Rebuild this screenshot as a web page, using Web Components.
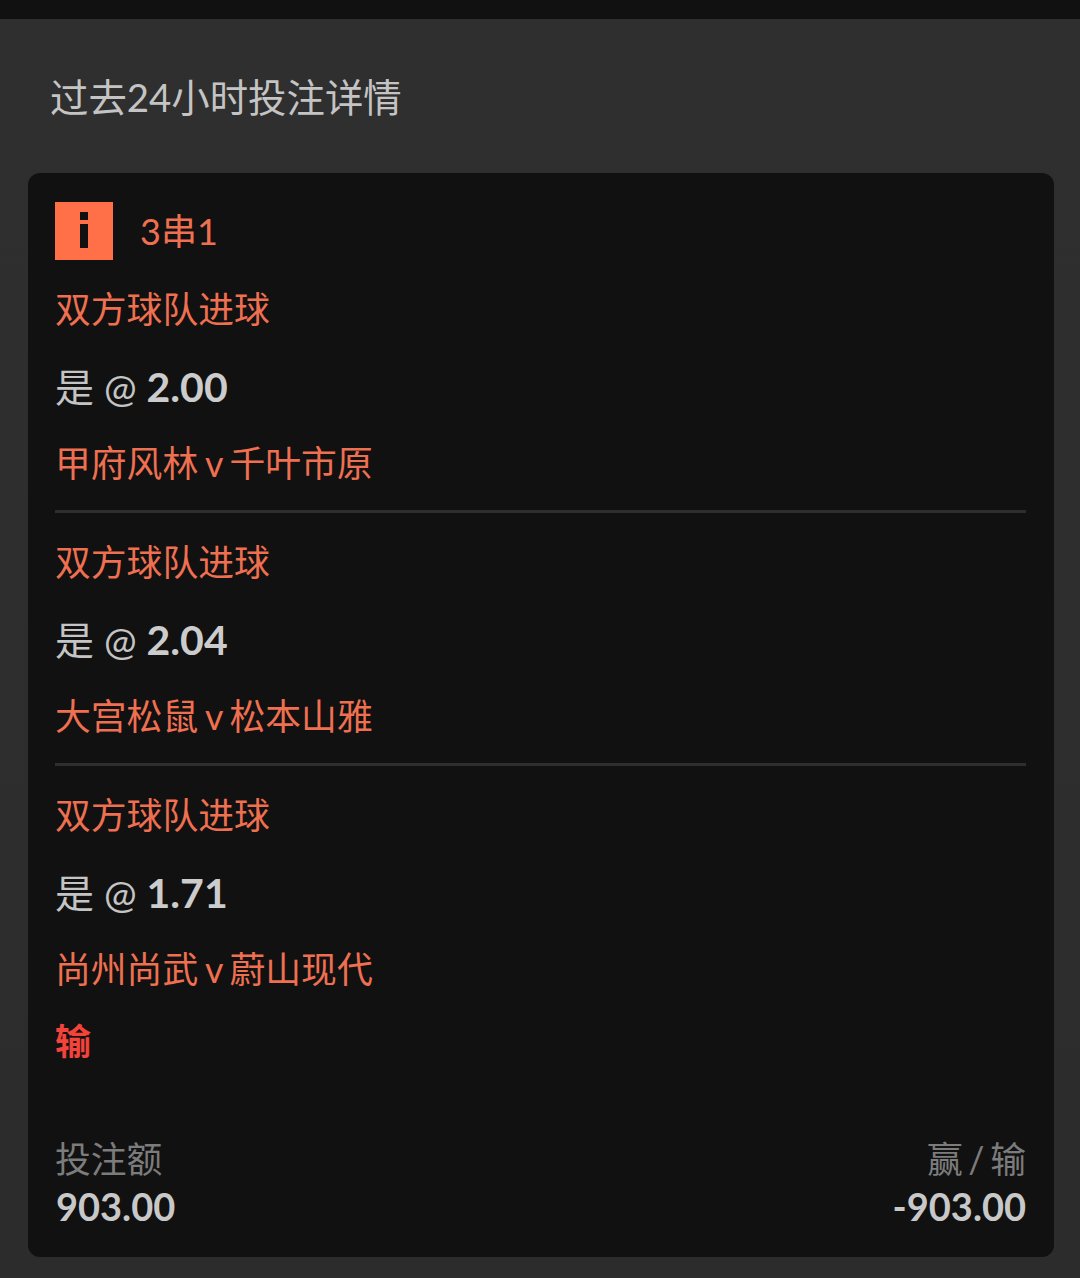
<!DOCTYPE html>
<html lang="zh">
<head>
<meta charset="utf-8">
<title>投注详情</title>
<style>
  html, body { margin: 0; background: #2e2e2e; }
  body { font-family: Lato, "Noto Sans CJK SC", sans-serif; }
</style>
</head>
<body>
<bet-history heading="过去24小时投注详情">
  <bet-card type="3串1" result="输" stake="903.00" pnl="-903.00">
    <bet-leg market="双方球队进球" pick="是" odds="2.00" match="甲府风林 v 千叶市原"></bet-leg>
    <bet-leg market="双方球队进球" pick="是" odds="2.04" match="大宫松鼠 v 松本山雅"></bet-leg>
    <bet-leg market="双方球队进球" pick="是" odds="1.71" match="尚州尚武 v 蔚山现代"></bet-leg>
  </bet-card>
</bet-history>

<script>
const historyTemplate = document.createElement('template');
historyTemplate.innerHTML = `
  <style>
    :host {
      display: block;
      height: 1278px;
      overflow: hidden;
      box-sizing: border-box;
      border-top: 19px solid #111;
      background: linear-gradient(#2f2f2f, #2c2c2c);
    }
    h1 {
      margin: 0;
      padding: 53px 0 0 50px;
      height: 154px;
      box-sizing: border-box;
      font-size: 38.4px;
      line-height: 50px;
      font-weight: 400;
      color: #c4c4c4;
    }
    .body { padding: 0 26px 0 28px; }
  </style>
  <h1></h1>
  <div class="body"><slot></slot></div>
`;

class BetHistory extends HTMLElement {
  constructor() {
    super();
    this.attachShadow({ mode: 'open' });
    this.shadowRoot.appendChild(historyTemplate.content.cloneNode(true));
    this.shadowRoot.querySelector('h1').textContent = this.getAttribute('heading');
  }
}

const cardTemplate = document.createElement('template');
cardTemplate.innerHTML = `
  <style>
    :host {
      display: block;
      box-sizing: border-box;
      height: 1084px;
      padding: 29px 28px 0 27px;
      border-radius: 12px;
      background: #111;
    }
    .head {
      display: flex;
      align-items: center;
      gap: 27px;
      height: 58px;
      font-size: 36px;
      color: #ef7050;
    }
    .type { padding-bottom: 4px; }
    .icon {
      width: 58px;
      height: 58px;
      flex: none;
      display: block;
    }
    .result {
      height: 53px;
      margin-top: -2px;
      font-size: 36px;
      line-height: 50px;
      font-weight: 700;
      color: #f4433a;
    }
    .foot {
      display: flex;
      justify-content: space-between;
      margin-top: 67px;
    }
    .label {
      font-size: 35.8px;
      line-height: 47px;
      color: #7c7c7c;
    }
    .right .label { word-spacing: -3.5px; }
    .amount {
      font-size: 38px;
      line-height: 46px;
      font-weight: 700;
      color: #c8c8c8;
    }
    .stake { padding-left: 1px; }
    .right { text-align: right; }
  </style>
  <div class="head">
    <svg class="icon" viewBox="0 0 58 58">
      <rect width="58" height="58" fill="#ff7048"/>
      <rect x="25" y="10" width="8" height="8" fill="#111"/>
      <rect x="25" y="22" width="8" height="24" fill="#111"/>
    </svg>
    <span class="type"></span>
  </div>
  <slot></slot>
  <div class="result"></div>
  <div class="foot">
    <div>
      <div class="label">投注额</div>
      <div class="amount stake"></div>
    </div>
    <div class="right">
      <div class="label">赢 / 输</div>
      <div class="amount pnl"></div>
    </div>
  </div>
`;

class BetCard extends HTMLElement {
  constructor() {
    super();
    this.attachShadow({ mode: 'open' });
    this.shadowRoot.appendChild(cardTemplate.content.cloneNode(true));
    const root = this.shadowRoot;
    root.querySelector('.type').textContent = this.getAttribute('type');
    root.querySelector('.result').textContent = this.getAttribute('result');
    root.querySelector('.stake').textContent = this.getAttribute('stake');
    root.querySelector('.pnl').textContent = this.getAttribute('pnl');
  }
}

const legTemplate = document.createElement('template');
legTemplate.innerHTML = `
  <style>
    :host {
      display: block;
      box-sizing: border-box;
      height: 253px;
      padding-top: 25px;
      border-bottom: 3px solid #2e2e2e;
    }
    :host(:last-of-type) { border-bottom: none; height: 252px; }
    div { height: 50px; line-height: 50px; white-space: nowrap; }
    .market, .match { font-size: 35.8px; color: #ef7050; }
    .match { word-spacing: -2.3px; margin-top: 27px; }
    .pick {
      margin-top: 27px;
      font-size: 39px;
      color: #c4c4c4;
    }
    .pick b { font-size: 41px; font-weight: 700; color: #cccccc; }
  </style>
  <div class="market"></div>
  <div class="pick"></div>
  <div class="match"></div>
`;

class BetLeg extends HTMLElement {
  constructor() {
    super();
    this.attachShadow({ mode: 'open' });
    this.shadowRoot.appendChild(legTemplate.content.cloneNode(true));
    const root = this.shadowRoot;
    root.querySelector('.market').textContent = this.getAttribute('market');
    root.querySelector('.match').textContent = this.getAttribute('match');
    const pick = root.querySelector('.pick');
    pick.textContent = this.getAttribute('pick') + ' @ ';
    const odds = document.createElement('b');
    odds.textContent = this.getAttribute('odds');
    pick.appendChild(odds);
  }
}

customElements.define('bet-history', BetHistory);
customElements.define('bet-card', BetCard);
customElements.define('bet-leg', BetLeg);
</script>
</body>
</html>
